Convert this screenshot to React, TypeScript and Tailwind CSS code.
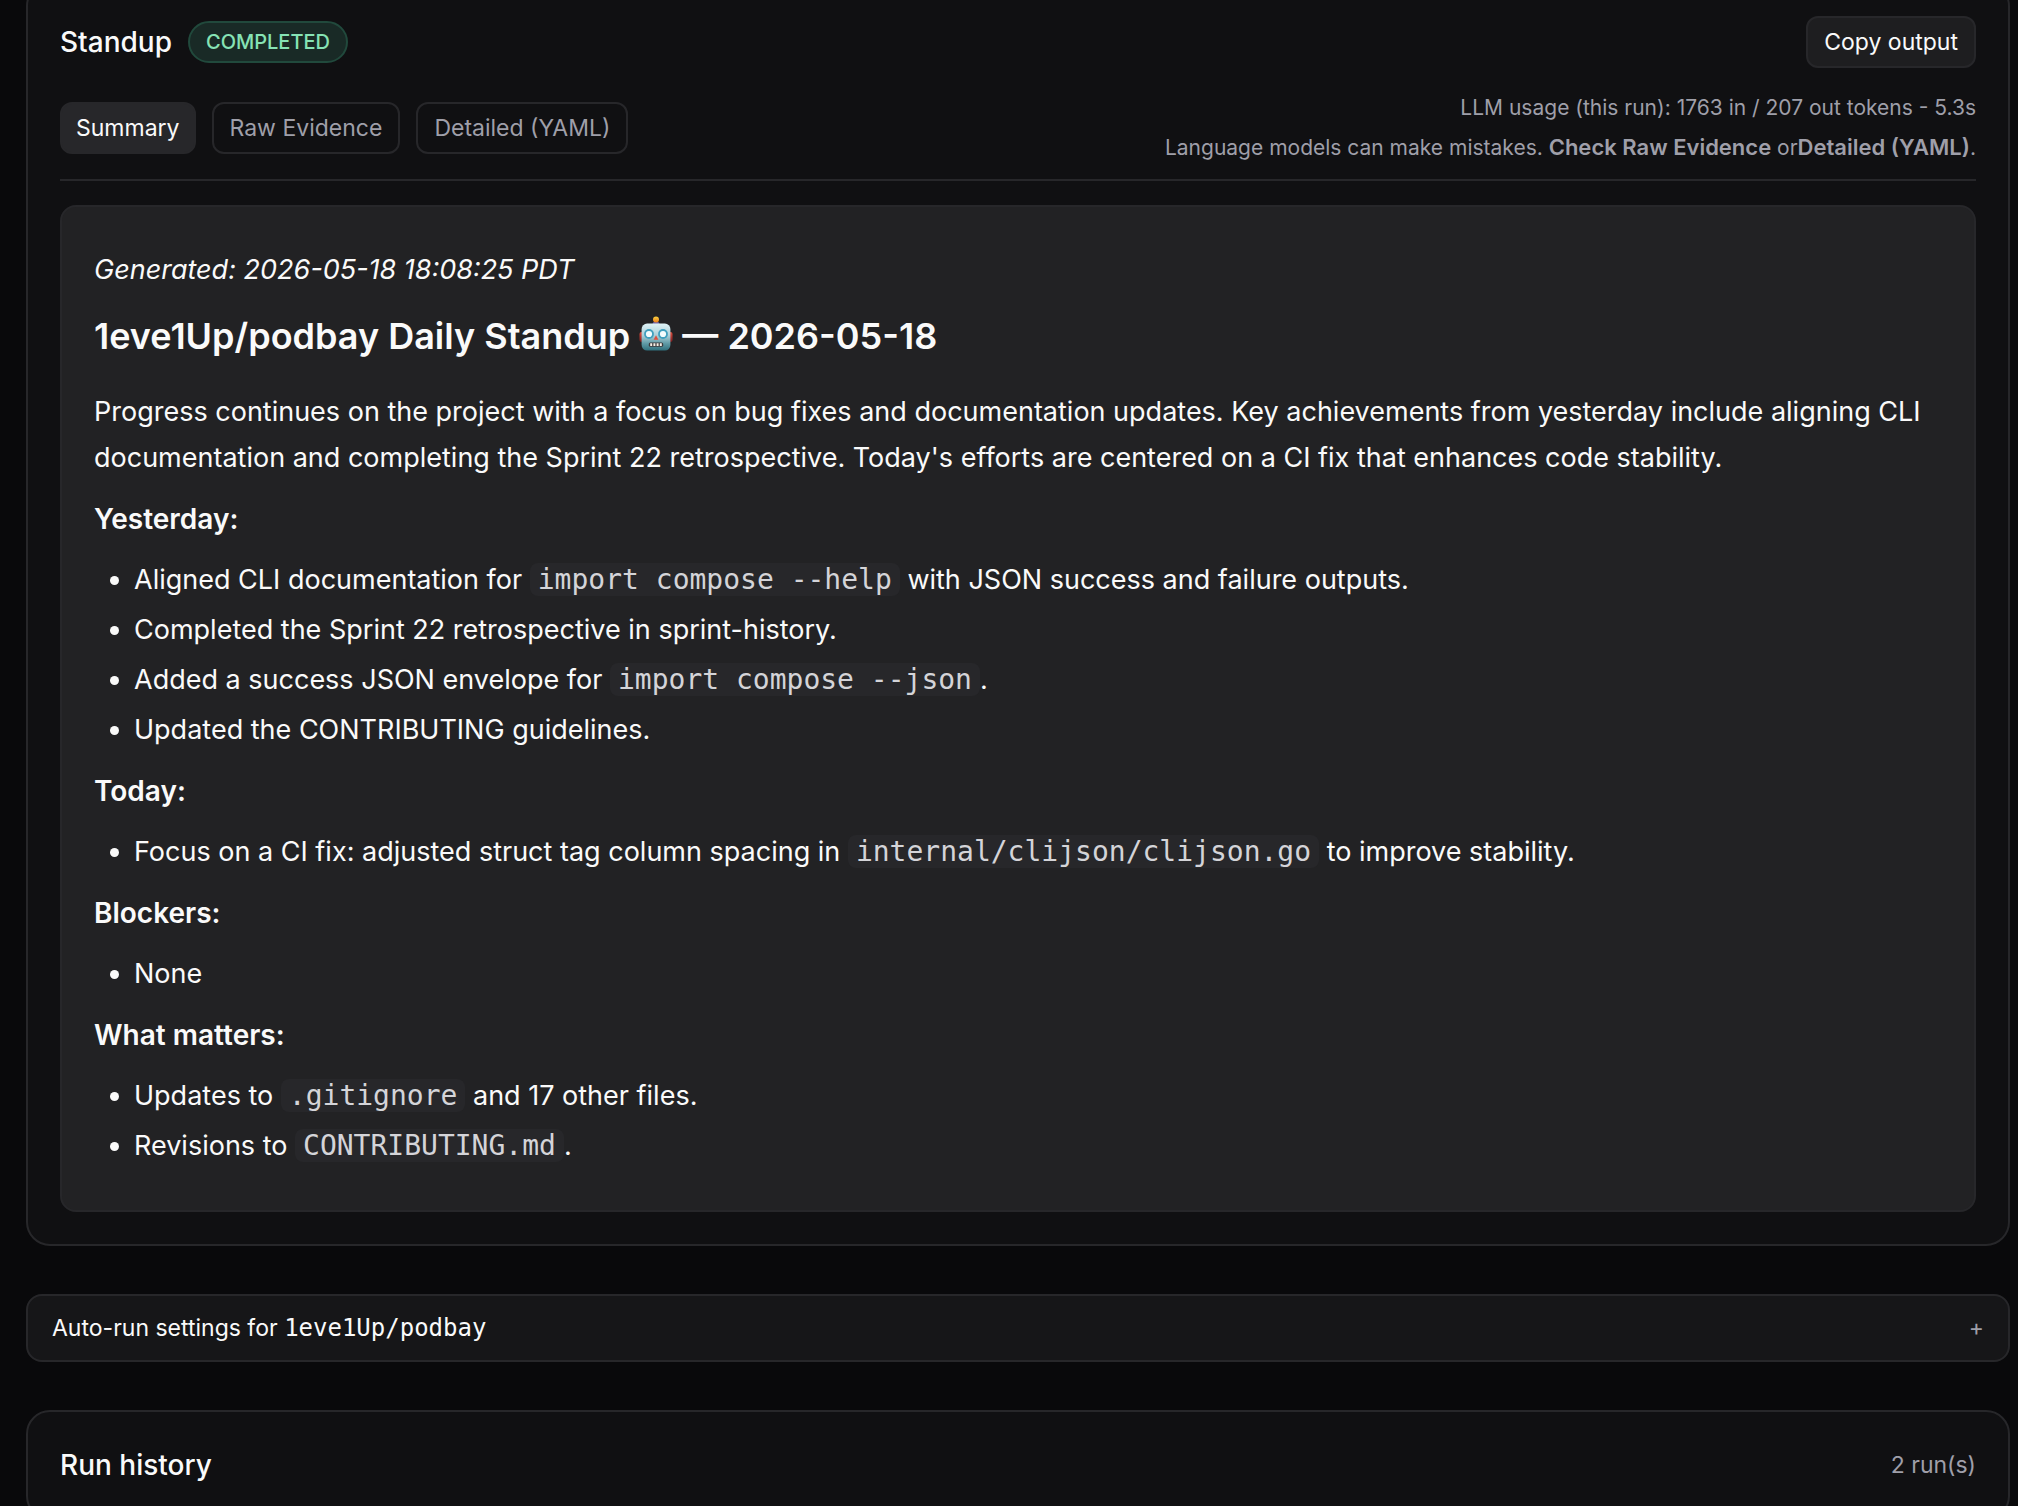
import { useState, type ReactNode } from "react";

const TABS = ["Summary", "Raw Evidence", "Detailed (YAML)"];

function Robot() {
  return (
    <svg viewBox="0 0 34 36" className="-mt-2 inline-block h-9 w-[34px] align-[-3px]" role="img" aria-label="robot">
      <defs>
        <linearGradient id="face" x1="0" y1="0" x2="0" y2="1">
          <stop offset="0" stopColor="#dff3f7" />
          <stop offset="0.45" stopColor="#a9cdd6" />
          <stop offset="0.75" stopColor="#5d98a3" />
          <stop offset="1" stopColor="#2f6f7c" />
        </linearGradient>
        <linearGradient id="ear" x1="0" y1="0" x2="0" y2="1">
          <stop offset="0" stopColor="#e0503f" />
          <stop offset="1" stopColor="#7c1a1c" />
        </linearGradient>
        <linearGradient id="bulb" x1="0" y1="0" x2="0" y2="1">
          <stop offset="0" stopColor="#fbd03c" />
          <stop offset="1" stopColor="#e8791f" />
        </linearGradient>
      </defs>
      <rect x="0.5" y="16" width="4" height="10" rx="2" fill="url(#ear)" />
      <rect x="29.5" y="16" width="4" height="10" rx="2" fill="url(#ear)" />
      <path d="M13.5 8.5a3.5 3 0 0 1 7 0z" fill="#6f62a8" />
      <circle cx="17" cy="3.6" r="3" fill="url(#bulb)" />
      <rect x="2.6" y="7.6" width="28.8" height="27" rx="5.5" fill="url(#face)" />
      <circle cx="10" cy="18" r="4.9" fill="#3f9fbe" />
      <circle cx="24" cy="18" r="4.9" fill="#3f9fbe" />
      <circle cx="10" cy="18" r="3.1" fill="#f4fcfd" />
      <circle cx="24" cy="18" r="3.1" fill="#f4fcfd" />
      <path d="M17 19.2l2.4 4.6h-4.8z" fill="#e0503f" />
      <rect x="9.8" y="26.4" width="14.4" height="4.4" rx="1.6" fill="#3c3a3c" />
      <path d="M11.2 27.3h2v2.6h-2zM14.4 27.3h2v2.6h-2zM17.6 27.3h2v2.6h-2zM20.8 27.3h2v2.6h-2z" fill="#f5efe6" />
    </svg>
  );
}

function Code({ children }: { children: ReactNode }) {
  return (
    <code className="rounded-lg bg-[#27272a] px-2 font-['DejaVu_Sans_Mono',monospace] text-[28px] leading-10 text-[#d4d4d8]">
      {children}
    </code>
  );
}

function Section({ title, items }: { title: string; items: ReactNode[] }) {
  return (
    <>
      <h3 className="text-[28px] font-semibold">{title}</h3>
      <ul className="flex list-disc flex-col gap-1 pl-10">
        {items.map((item, i) => (
          <li key={i}>{item}</li>
        ))}
      </ul>
    </>
  );
}

export default function App() {
  const [tab, setTab] = useState(TABS[0]);
  return (
    <div className="min-h-screen overflow-hidden bg-[#09090b] pr-2 pl-[26px] font-[Inter,sans-serif] text-[#fafafa]">
      <main className="-mt-[18px] flex flex-col gap-12">
        <section className="rounded-3xl border-2 border-[#27272a] bg-[#101012] p-8">
          <header className="flex items-center gap-4">
            <h1 className="text-[28px] font-medium">Standup</h1>
            <span className="flex h-[42px] items-center rounded-full border-2 border-[#21493c] bg-[#192a26] px-4 text-[20px] font-medium text-[#86e3b5]">
              COMPLETED
            </span>
            <button className="ml-auto h-[52px] rounded-xl border-2 border-[#27272a] bg-[#1e1e20] px-4 text-[23px]">
              Copy output
            </button>
          </header>
          <div className="mt-5 flex items-center justify-between border-b-2 border-[#27272a] pb-[11px]">
            <div role="tablist" className="flex gap-4">
              {TABS.map((name) => (
                <button
                  key={name}
                  role="tab"
                  aria-selected={tab === name}
                  onClick={() => setTab(name)}
                  className={
                    tab === name
                      ? "h-[52px] rounded-xl border-2 border-[#27272a] bg-[#27272a] px-3.5 text-[23px]"
                      : "h-[52px] rounded-xl border-2 border-[#27272a] px-4 text-[23px] text-[#9f9fa9]"
                  }
                >
                  {name}
                </button>
              ))}
            </div>
            <div className="text-right text-[21px] leading-10 text-[#9f9fa9]">
              <p>LLM usage (this run): 1763 in / 207 out tokens - 5.3s</p>
              <p>
                Language models can make mistakes.{" "}
                <strong className="text-[22px] leading-8 font-semibold">Check Raw Evidence</strong> or
                <strong className="text-[22px] leading-8 font-semibold">Detailed (YAML)</strong>.
              </p>
            </div>
          </div>
          <article className="mt-6 flex flex-col gap-[15px] rounded-2xl border-2 border-[#27272a] bg-[#222224] px-8 pt-10 pb-[41px] text-[27px] leading-[46px]">
            <p className="italic">Generated: 2026-05-18 18:08:25 PDT</p>
            <h2 className="mt-[5px] mb-[15px] text-[36px] font-semibold">
              1eve1Up/podbay Daily Standup <Robot /> — 2026-05-18
            </h2>
            <p>
              Progress continues on the project with a focus on bug fixes and documentation updates. Key achievements
              from yesterday include aligning CLI documentation and completing the Sprint 22 retrospective. Today's
              efforts are centered on a CI fix that enhances code stability.
            </p>
            <Section
              title="Yesterday:"
              items={[
                <>Aligned CLI documentation for <Code>import compose --help</Code> with JSON success and failure outputs.</>,
                <>Completed the Sprint 22 retrospective in sprint-history.</>,
                <>Added a success JSON envelope for <Code>import compose --json</Code>.</>,
                <>Updated the CONTRIBUTING guidelines.</>,
              ]}
            />
            <Section
              title="Today:"
              items={[
                <>Focus on a CI fix: adjusted struct tag column spacing in <Code>internal/clijson/clijson.go</Code> to improve stability.</>,
              ]}
            />
            <Section title="Blockers:" items={["None"]} />
            <Section
              title="What matters:"
              items={[
                <>Updates to <Code>.gitignore</Code> and 17 other files.</>,
                <>Revisions to <Code>CONTRIBUTING.md</Code>.</>,
              ]}
            />
          </article>
        </section>

        <button className="flex h-[68px] items-center justify-between rounded-2xl border-2 border-[#27272a] bg-[#161618] px-6 text-left">
          <span className="text-[23px]">
            Auto-run settings for{" "}
            <span className="font-['DejaVu_Sans_Mono',monospace] text-[24px]">1eve1Up/podbay</span>
          </span>
          <span className="text-[23px] text-[#9f9fa9]">+</span>
        </button>

        <section className="rounded-3xl border-2 border-[#27272a] bg-[#101012] p-8">
          <div className="flex items-center justify-between">
            <h2 className="text-[28px] leading-[42px] font-medium">Run history</h2>
            <span className="text-[23px] text-[#9f9fa9]">2 run(s)</span>
          </div>
        </section>
      </main>
    </div>
  );
}
